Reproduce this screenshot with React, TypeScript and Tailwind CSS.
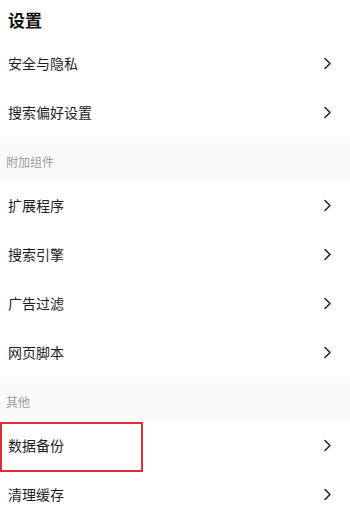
const font = { fontFamily: '"Noto Sans CJK SC", "Noto Sans", sans-serif' }

type Section = { title?: string; items: string[] }

const sections: Section[] = [
  { items: ['安全与隐私', '搜索偏好设置'] },
  { title: '附加组件', items: ['扩展程序', '搜索引擎', '广告过滤', '网页脚本'] },
  { title: '其他', items: ['数据备份', '清理缓存'] },
]

function Chevron() {
  return (
    <svg width="9" height="13" viewBox="0 0 9 13" fill="none" className="flex-shrink-0">
      <path d="M2 1.5 L7 6.5 L2 11.5" stroke="#2a2a2a" strokeWidth="1.6" strokeLinecap="round" strokeLinejoin="round" />
    </svg>
  )
}

function Row({ label, marked }: { label: string; marked?: boolean }) {
  return (
    <div className="relative flex items-center justify-between h-[49px] pl-2 pr-[18px]">
      <span className="text-[14px] text-[#1e1e1e]">{label}</span>
      <Chevron />
      {/* red annotation box */}
      {marked && (
        <div className="absolute left-0 top-[1px] w-[143px] h-[50px] border-2 border-[#dc2f35]" />
      )}
    </div>
  )
}

export default function App() {
  return (
    <div className="w-[350px] h-[526px] bg-white overflow-hidden" style={font}>
      <div className="h-[39px] flex items-center pl-2">
        <h1 className="text-[17px] font-bold text-[#111]">设置</h1>
      </div>
      {sections.map((s, i) => (
        <div key={i}>
          {s.title && (
            <div className="h-[44px] bg-[#fafafa] flex items-center pl-[6px] pt-[6px]">
              <span className="text-[12px] text-[#9a9a9a]">{s.title}</span>
            </div>
          )}
          {s.items.map(item => (
            <Row key={item} label={item} marked={item === '数据备份'} />
          ))}
        </div>
      ))}
    </div>
  )
}
